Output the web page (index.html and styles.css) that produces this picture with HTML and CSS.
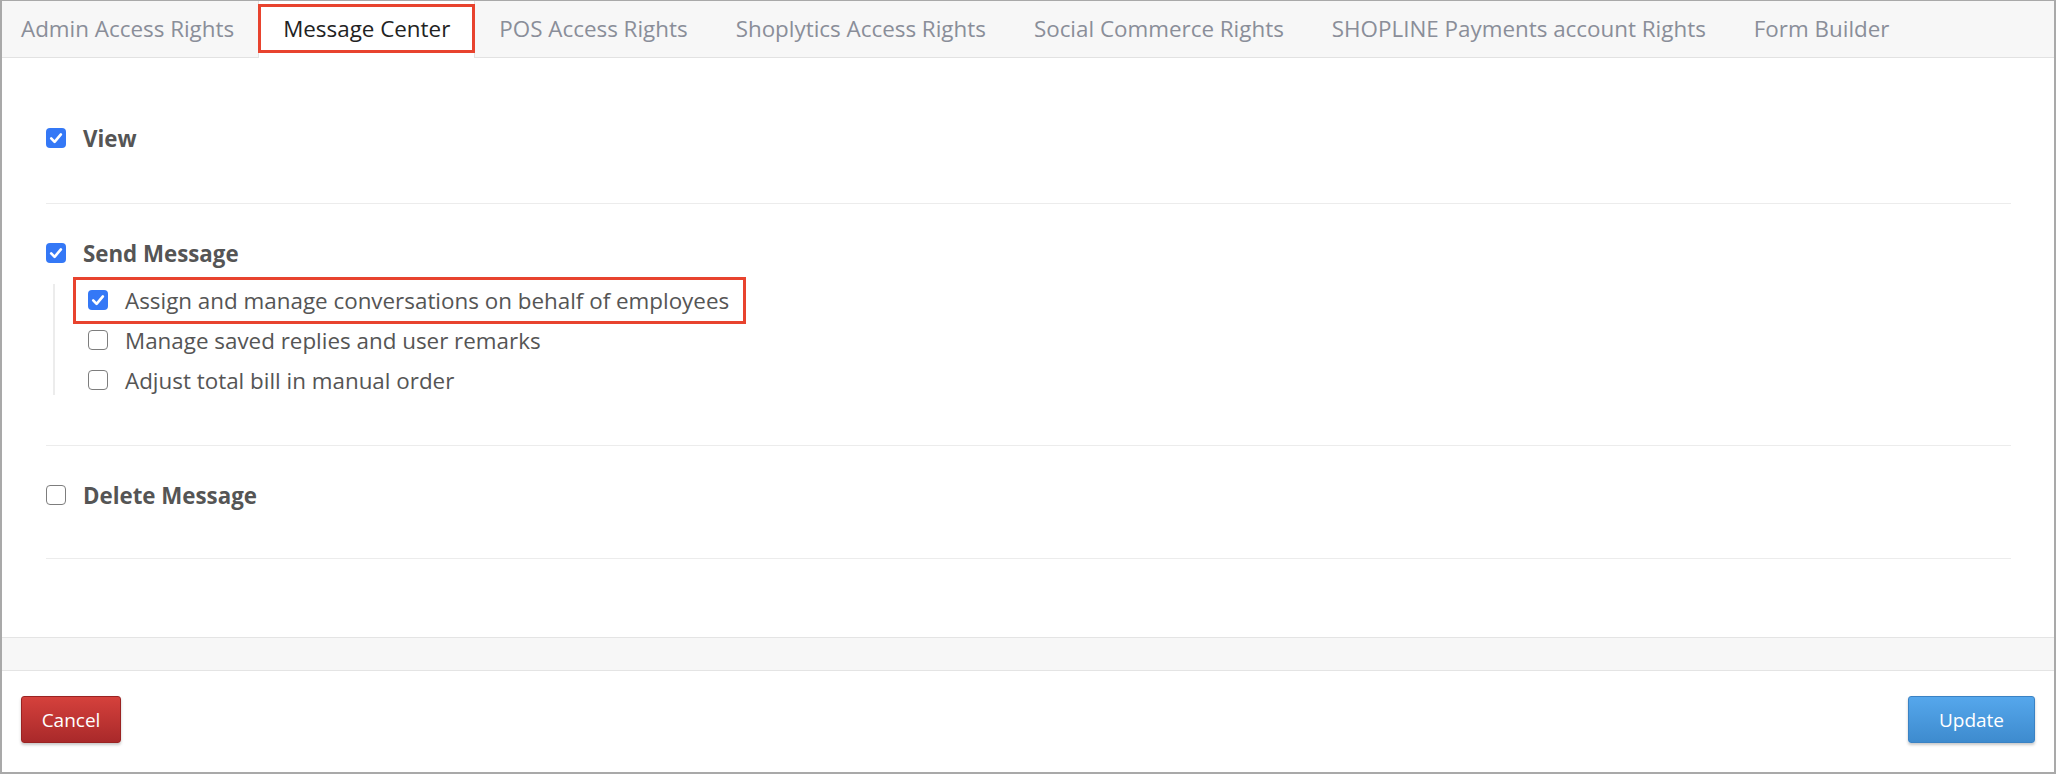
FILE: index.html
```html
<!DOCTYPE html>
<html lang="en">
<head>
<meta charset="utf-8">
<title>Message Center Access Rights</title>
<link rel="stylesheet" href="styles.css">
</head>
<body>
<div class="panel">
  <nav class="tabs">
    <div class="tab first">Admin Access Rights</div>
    <div class="tab active">Message Center<span class="mark"></span></div>
    <div class="tab">POS Access Rights</div>
    <div class="tab">Shoplytics Access Rights</div>
    <div class="tab">Social Commerce Rights</div>
    <div class="tab">SHOPLINE Payments account Rights</div>
    <div class="tab">Form Builder</div>
  </nav>

  <div class="content">
    <section class="section">
      <label class="main-row">
        <span class="cb checked"><svg viewBox="0 0 20 20"><path d="M5.2 10.4 8.6 13.8 14.9 6.4"/></svg></span>
        <span class="main-label">View</span>
      </label>
    </section>

    <section class="section">
      <label class="main-row">
        <span class="cb checked"><svg viewBox="0 0 20 20"><path d="M5.2 10.4 8.6 13.8 14.9 6.4"/></svg></span>
        <span class="main-label">Send Message</span>
      </label>
      <div class="sub-list">
        <div class="sub-item">
          <label class="sub-row highlighted">
            <span class="cb checked"><svg viewBox="0 0 20 20"><path d="M5.2 10.4 8.6 13.8 14.9 6.4"/></svg></span>
            <span>Assign and manage conversations on behalf of employees</span>
            <span class="mark"></span>
          </label>
        </div>
        <div class="sub-item">
          <label class="sub-row">
            <span class="cb"></span>
            <span>Manage saved replies and user remarks</span>
          </label>
        </div>
        <div class="sub-item">
          <label class="sub-row">
            <span class="cb"></span>
            <span>Adjust total bill in manual order</span>
          </label>
        </div>
      </div>
    </section>

    <section class="section last">
      <label class="main-row">
        <span class="cb"></span>
        <span class="main-label">Delete Message</span>
      </label>
    </section>
  </div>

  <div class="band"></div>

  <footer class="footer">
    <button class="btn btn-cancel">Cancel</button>
    <button class="btn btn-update">Update</button>
  </footer>
</div>
</body>
</html>
```
FILE: styles.css
```css
* { box-sizing: border-box; }

html, body {
  margin: 0;
  padding: 0;
  background: #ffffff;
}

body {
  font-family: "Open Sans", "Noto Sans", "DejaVu Sans", sans-serif;
}

.panel {
  width: 2056px;
  height: 774px;
  border: 2px solid #a9a9a9;
  border-top-width: 1px;
  display: flex;
  flex-direction: column;
  background: #ffffff;
}

/* ---------- tabs ---------- */
.tabs {
  display: flex;
  height: 57px;
  background: #f7f7f7;
  border-bottom: 1px solid #e2e2e2;
  flex-shrink: 0;
}

.tab {
  display: flex;
  align-items: center;
  padding: 0 24px 2px;
  font-size: 22.4px;
  color: #8a8e99;
  white-space: nowrap;
}

.tab.first { padding-left: 19px; }

.tab.active {
  position: relative;
  background: #ffffff;
  color: #222222;
  border-left: 1px solid #e2e2e2;
  border-right: 1px solid #e2e2e2;
  margin-bottom: -1px;
}

.mark {
  position: absolute;
  border: 3px solid #e8432e;
  pointer-events: none;
}

.tab.active .mark {
  top: 3px;
  bottom: 5px;
  left: -1px;
  right: -1px;
}

/* ---------- content ---------- */
.content {
  flex: 1;
  padding: 31px 43px 0 44px;
}

.section {
  padding: 35px 0 50px;
  border-bottom: 1px solid #ececec;
}

.section.last {
  padding-bottom: 48px;
}

.main-row,
.sub-row {
  display: inline-flex;
  align-items: center;
  gap: 17px;
  color: #555555;
}

.main-row {
  height: 28px;
}

.main-label {
  font-size: 22.3px;
  font-weight: 700;
  color: #555555;
}

.cb {
  width: 20px;
  height: 20px;
  border-radius: 4px;
  border: 1.5px solid #7d7d7d;
  background: #ffffff;
  flex-shrink: 0;
  display: flex;
  align-items: center;
  justify-content: center;
}

.cb.checked {
  border: none;
  background: #3478f6;
}

.cb svg {
  width: 20px;
  height: 20px;
  fill: none;
  stroke: #ffffff;
  stroke-width: 2.6;
  stroke-linecap: round;
  stroke-linejoin: round;
}

.sub-list {
  margin: 16px 0 0 7px;
  padding: 1px 0 0 33px;
  border-left: 2px solid #ececec;
  display: flex;
  flex-direction: column;
  gap: 10px;
}

.sub-item {
  height: 30px;
  display: flex;
  align-items: center;
}

.sub-row {
  position: relative;
  font-size: 22.4px;
  height: 30px;
}

.sub-row .mark {
  top: -8px;
  bottom: -9px;
  left: -15px;
  right: -17px;
}

/* ---------- footer ---------- */
.band {
  height: 34px;
  flex-shrink: 0;
  background: #f7f7f7;
  border-top: 1px solid #e4e4e4;
  border-bottom: 1px solid #e4e4e4;
}

.footer {
  height: 101px;
  flex-shrink: 0;
  display: flex;
  justify-content: space-between;
  align-items: flex-start;
  padding: 25px 19px 0;
}

.btn {
  height: 47px;
  border-radius: 3px;
  font-family: "Open Sans", "Noto Sans", sans-serif;
  font-size: 19px;
  color: #ffffff;
  cursor: pointer;
  box-shadow: 0 2px 3px rgba(0, 0, 0, 0.22);
  padding: 0;
}

.btn-cancel {
  width: 100px;
  background: linear-gradient(#d5413c, #a9292a);
  border: 1px solid #9a2322;
}

.btn-update {
  width: 127px;
  background: linear-gradient(#55a7ec, #3e8bce);
  border: 1px solid #3a82c4;
}
```
